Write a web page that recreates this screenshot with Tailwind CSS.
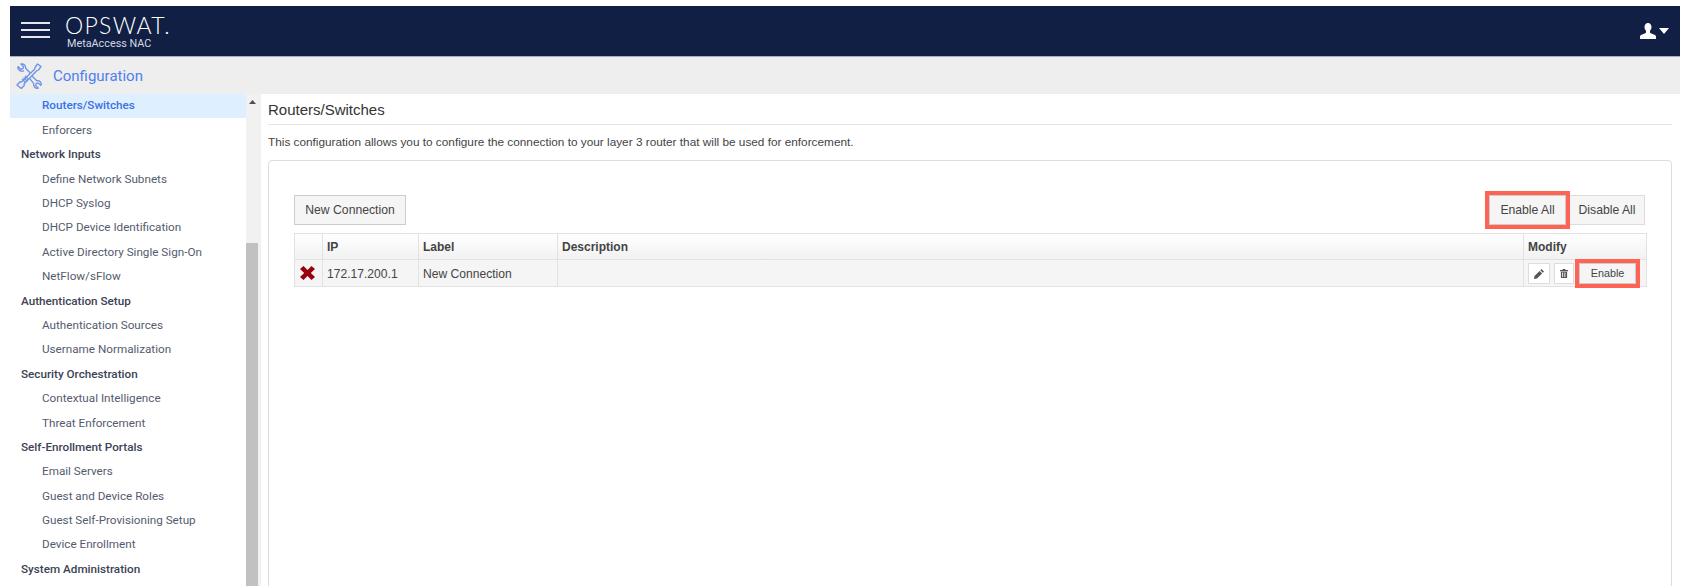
<!DOCTYPE html>
<html lang="en">
<head>
    <meta charset="UTF-8">
    <title>MetaAccess NAC - Routers/Switches</title>
    <script src="https://cdn.jsdelivr.net/npm/@tailwindcss/browser@4"></script>
</head>
<body class="bg-white h-[586px] overflow-hidden pt-[6px] pl-[10px] pr-[3px] flex flex-col font-['Liberation_Sans',sans-serif]">
    <!-- top bar -->
    <header class="h-[51px] shrink-0 bg-[#111f45] border-b border-[#a9afc0] flex items-center text-white">
        <div class="w-[29px] ml-[11px] mb-[3px] flex flex-col gap-[5px]">
            <span class="h-[2px] bg-[#e6e8ee]"></span>
            <span class="h-[2px] bg-[#e6e8ee]"></span>
            <span class="h-[2px] bg-[#e6e8ee]"></span>
        </div>
        <div class="ml-[15px] flex flex-col">
            <span class="font-['Lato',sans-serif] font-light text-[23px] leading-[24px] tracking-[1.300px]">OPSWAT.</span>
            <span class="font-['Roboto',sans-serif] text-[10.800px] leading-[13px] text-[#d5d8e2] ml-[2px]">MetaAccess NAC</span>
        </div>
        <div class="ml-auto mr-[11px] flex items-center gap-[3px]">
            <svg width="16" height="16" viewBox="0 0 16 16" fill="#fff"><path d="M8 0c2.200 0 3.500 1.700 3.500 4 0 1.600-.7 3-1.500 3.800v1.500c0 .8 1 1.100 2.500 1.700 1.900.7 3.500 1.300 3.500 2.500V16H0v-2.500c0-1.200 1.600-1.800 3.500-2.500C5 10.400 6 10.100 6 9.300V7.800C5.200 7 4.500 5.600 4.500 4 4.500 1.700 5.800 0 8 0z"/></svg>
            <svg width="10" height="6" viewBox="0 0 10 6" fill="#fff"><path d="M0 0h10L5 6z"/></svg>
        </div>
    </header>

    <!-- section bar -->
    <div class="h-[37px] shrink-0 bg-[#eeeeee] flex items-center pl-[6px]">
        <svg width="26" height="26" viewBox="0 0 26 26" fill="none" stroke="#6c93e6" stroke-width="1.300" stroke-linejoin="round">
            <path d="M21.500 1l3.500 2.500-2.500 3.500-1.500.5L8 21l.3 1.500-3 3L1 22l3-3.200 1.400.2L18.600 6.300l.4-1.800z"/>
            <path d="M6 16l3.500 3.500M7.500 14.500l3.500 3.500M9 13l3.500 3.500"/>
            <path d="M2 3.500L5 6.300l2-.6.600-2L5 1c2.500-.6 5 1.200 4.600 4.200l5 5M16 13l4.800 4.800c3-.6 5 2 4.200 4.600l-2.800-2.500-2 .5-.6 2 2.700 2.800c-2.800.7-5.300-1.700-4.500-4.600L13.800 15.600M8 7.800C5 9 1 7 2 3.500"/>
        </svg>
        <span class="ml-[11px] mt-[1px] font-['Roboto',sans-serif] text-[15px] text-[#4f80ee]">Configuration</span>
    </div>

    <div class="flex-1 flex min-h-0">
        <!-- side menu -->
        <nav class="w-[236px] shrink-0 font-['Roboto',sans-serif] text-[11.700px] text-[#555b6e]">
            <a class="flex items-center h-[24.400px] pl-[32px] bg-[#deefff] text-[#3f6fe0] font-medium">Routers/Switches</a>
            <a class="flex items-center h-[24.400px] pl-[32px]">Enforcers</a>
            <h4 class="flex items-center h-[24.400px] pl-[11px] font-medium text-[#3c4356]">Network Inputs</h4>
            <a class="flex items-center h-[24.400px] pl-[32px]">Define Network Subnets</a>
            <a class="flex items-center h-[24.400px] pl-[32px]">DHCP Syslog</a>
            <a class="flex items-center h-[24.400px] pl-[32px]">DHCP Device Identification</a>
            <a class="flex items-center h-[24.400px] pl-[32px]">Active Directory Single Sign-On</a>
            <a class="flex items-center h-[24.400px] pl-[32px]">NetFlow/sFlow</a>
            <h4 class="flex items-center h-[24.400px] pl-[11px] font-medium text-[#3c4356]">Authentication Setup</h4>
            <a class="flex items-center h-[24.400px] pl-[32px]">Authentication Sources</a>
            <a class="flex items-center h-[24.400px] pl-[32px]">Username Normalization</a>
            <h4 class="flex items-center h-[24.400px] pl-[11px] font-medium text-[#3c4356]">Security Orchestration</h4>
            <a class="flex items-center h-[24.400px] pl-[32px]">Contextual Intelligence</a>
            <a class="flex items-center h-[24.400px] pl-[32px]">Threat Enforcement</a>
            <h4 class="flex items-center h-[24.400px] pl-[11px] font-medium text-[#3c4356]">Self-Enrollment Portals</h4>
            <a class="flex items-center h-[24.400px] pl-[32px]">Email Servers</a>
            <a class="flex items-center h-[24.400px] pl-[32px]">Guest and Device Roles</a>
            <a class="flex items-center h-[24.400px] pl-[32px]">Guest Self-Provisioning Setup</a>
            <a class="flex items-center h-[24.400px] pl-[32px]">Device Enrollment</a>
            <h4 class="flex items-center h-[24.400px] pl-[11px] font-medium text-[#3c4356]">System Administration</h4>
        </nav>

        <!-- scrollbar -->
        <div class="w-[15px] shrink-0 bg-[#f1f1f1] flex flex-col">
            <div class="h-[149px] flex justify-center pt-[6px] pr-[3px]">
                <svg width="7" height="4" viewBox="0 0 7 4" fill="#505050"><path d="M0 4L3.500 0 7 4z"/></svg>
            </div>
            <div class="flex-1 w-[12px] bg-[#c1c1c1]"></div>
        </div>

        <!-- content -->
        <main class="flex-1 min-w-0 overflow-hidden pl-[7px] pr-[8px] text-[#444]">
            <h2 class="h-[31px] flex items-end pb-[5px] text-[15px] leading-[18px] text-[#333] border-b border-[#e5e5e5]">Routers/Switches</h2>
            <p class="mt-[9px] text-[11.800px] leading-[16px]">This configuration allows you to configure the connection to your layer 3 router that will be used for enforcement.</p>
            <section class="mt-[10px] h-[500px] border border-[#dddddd] rounded-[4px] pl-[25px] pr-[26px] pt-[34px]">
                <div class="flex items-start justify-between">
                    <button class="h-[30px] w-[112px] border border-[#cccccc] bg-[#f5f5f5] text-[12.200px] text-[#444]">New Connection</button>
                    <div class="flex">
                        <button class="relative z-10 h-[30px] w-[77px] border border-[#cccccc] bg-[#f5f5f5] text-[12.200px] text-[#444] outline-4 outline-[#ff6353]">Enable All</button>
                        <button class="h-[30px] w-[79px] pl-[3px] border border-[#dddddd] bg-[#f5f5f5] text-[12.200px] text-[#444]">Disable All</button>
                    </div>
                </div>
                <table class="mt-[8px] w-[1352px] table-fixed border-collapse text-[12px] text-[#444]">
                    <colgroup>
                        <col class="w-[28px]"><col class="w-[96px]"><col class="w-[139px]"><col class="w-[966px]"><col class="w-[123px]">
                    </colgroup>
                    <thead>
                        <tr class="h-[26px] bg-gradient-to-b from-white to-[#f1f1f1] text-left">
                            <th class="border border-[#e2e2e2]"></th>
                            <th class="border border-[#e2e2e2] px-[4px] font-bold">IP</th>
                            <th class="border border-[#e2e2e2] px-[4px] font-bold">Label</th>
                            <th class="border border-[#e2e2e2] px-[4px] font-bold">Description</th>
                            <th class="border border-[#e2e2e2] px-[4px] font-bold">Modify</th>
                        </tr>
                    </thead>
                    <tbody>
                        <tr class="h-[27px] bg-[#f5f5f5]">
                            <td class="border border-[#e2e2e2] pr-[2px]">
                                <svg class="mx-auto" width="15" height="14" viewBox="0 0 15 14" fill="#99000f"><path d="M3.500 0L7.500 4 11.500 0 15 3 10.800 7 15 11 11.500 14 7.500 10 3.500 14 0 11 4.200 7 0 3z"/></svg>
                            </td>
                            <td class="border border-[#e2e2e2] px-[4px] pt-[2px] text-[12.100px]">172.17.200.1</td>
                            <td class="border border-[#e2e2e2] px-[4px] pt-[2px] text-[12.100px]">New Connection</td>
                            <td class="border border-[#e2e2e2] px-[4px]"></td>
                            <td class="border border-[#e2e2e2] pl-[4px]">
                                <div class="flex items-center gap-[4px] mt-[1px]">
                                    <button class="w-[22px] h-[21px] border border-[#dddddd] bg-white flex items-center justify-center">
                                        <svg width="10" height="10" viewBox="0 0 10 10" fill="#555"><path d="M7.500 0L10 2.500 8.800 3.700 6.300 1.200zM5.600 1.900L8.100 4.400 3 9.500 0 10 .5 7z"/></svg>
                                    </button>
                                    <button class="w-[20px] h-[21px] border border-[#dddddd] bg-white flex items-center justify-center">
                                        <svg width="8" height="9" viewBox="0 0 9 10" fill="#555"><path d="M3 0h3v1h3v1.500H0V1h3zM1 3h7v7H1zM2.500 4v5h1V4zM5 4v5h1V4z" fill-rule="evenodd"/></svg>
                                    </button>
                                    <button class="ml-[1px] w-[57px] h-[21px] border border-[#cccccc] bg-[#f5f5f5] text-[10.800px] text-[#444] outline-4 outline-[#ff6353]">Enable</button>
                                </div>
                            </td>
                        </tr>
                    </tbody>
                </table>
            </section>
        </main>
    </div>
</body>
</html>
